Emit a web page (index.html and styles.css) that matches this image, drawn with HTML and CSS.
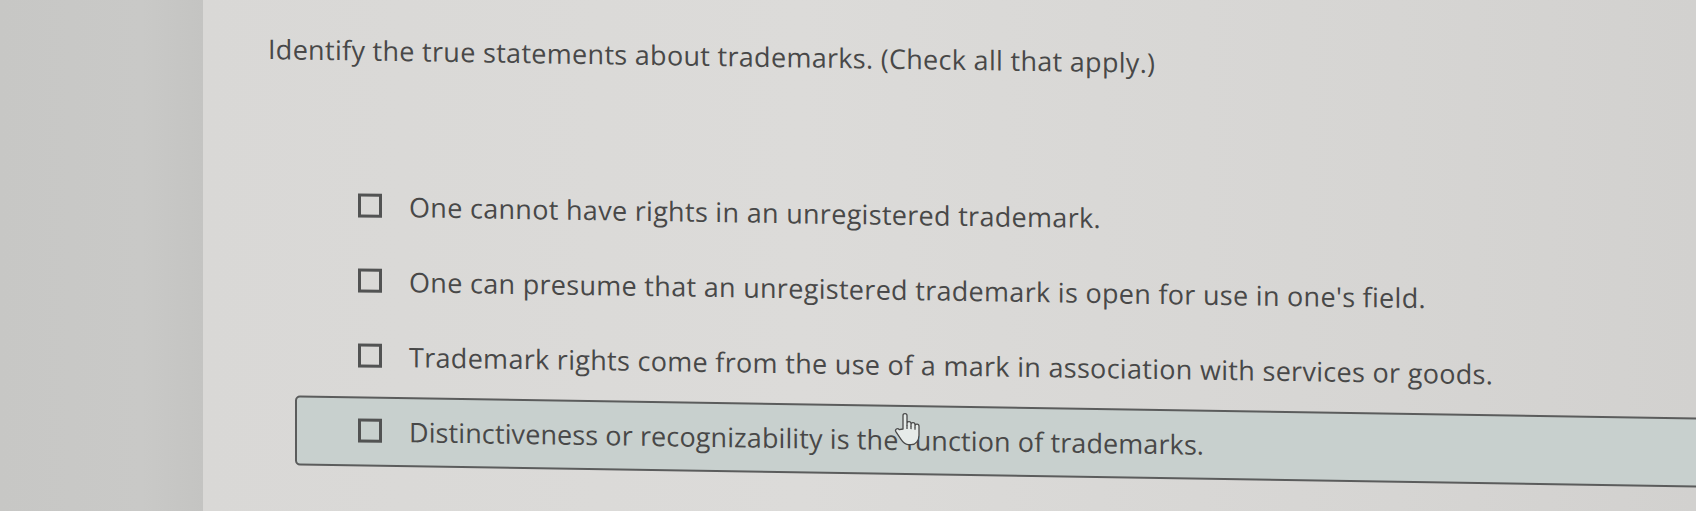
FILE: index.html
```html
<!DOCTYPE html>
<html lang="en">
<head>
<meta charset="utf-8">
<title>Trademarks question</title>
<link rel="stylesheet" href="styles.css">
</head>
<body>
<div class="screen">
  <aside class="side"></aside>
  <main class="content">
    <div class="inner">
      <p class="question">Identify the true statements about trademarks. (Check all that apply.)</p>
      <ul class="options">
        <li class="option"><span class="box"></span><span class="label">One cannot have rights in an unregistered trademark.</span></li>
        <li class="option"><span class="box"></span><span class="label">One can presume that an unregistered trademark is open for use in one's field.</span></li>
        <li class="option"><span class="box"></span><span class="label">Trademark rights come from the use of a mark in association with services or goods.</span></li>
        <li class="option hover"><span class="box"></span><span class="label last">Distinctiveness or recognizability is the function of trademarks.</span>
          <svg class="cursor" viewBox="0 0 28 34" aria-hidden="true">
            <path d="M9 17 V3.5 a2 2 0 0 1 4 0 V13 V11.5 a2 2 0 0 1 4 0 V14 V12.5 a2 2 0 0 1 4 0 V15 V14 a2 2 0 0 1 4 0 V23 c0 5 -3 9.5 -8 9.5 h-3 c-3 0 -5 -2 -7 -5 l-5 -7.5 a2 2 0 0 1 3.2 -2.4 Z" />
            <path class="gap" d="M13 13 v4 M17 14 v3 M21 15 v2.5" />
          </svg>
        </li>
      </ul>
    </div>
  </main>
</div>
</body>
</html>
```
FILE: styles.css
```css
html, body {
  margin: 0;
  padding: 0;
  width: 100%;
  height: 100%;
  overflow: hidden;
  background: #d7d6d4;
}

.screen {
  display: flex;
  width: 100%;
  height: 100%;
  font-family: "Open Sans", Lato, "Liberation Sans", sans-serif;
  color: #484848;
}

.side {
  flex: 0 0 203px;
  background: linear-gradient(90deg, #c7c7c5 0%, #c9c9c7 70%, #c4c4c2 100%);
}

.content {
  flex: 1;
  min-width: 0;
  overflow: hidden;
  background: linear-gradient(90deg, #d9d8d6 0%, #dcdbd9 40%, #d6d5d3 80%, #d2d1cf 100%);
}

.inner {
  transform: skewY(0.9deg);
  transform-origin: 0 0;
}

.question {
  margin: 0;
  padding: 32px 0 0 65px;
  font-size: 27px;
  line-height: 32px;
  letter-spacing: 0.3px;
}

.options {
  list-style: none;
  margin: 105px -40px 0 92px;
  padding: 0;
  display: flex;
  flex-direction: column;
  gap: 5px;
}

.option {
  position: relative;
  display: flex;
  align-items: center;
  height: 70px;
  box-sizing: border-box;
  padding-left: 61px;
  border: 2px solid transparent;
  border-radius: 5px;
  font-size: 27px;
  line-height: 32px;
  letter-spacing: 0.3px;
}

.option.hover {
  background: #c8d0ce;
  border-color: #5b5c5c;
}

.box {
  flex: 0 0 24px;
  width: 24px;
  height: 24px;
  box-sizing: border-box;
  border: 3px solid #525353;
  margin-right: 27px;
  margin-bottom: 3px;
}

.label {
  white-space: nowrap;
}

.label.last {
  letter-spacing: 0.1px;
}

.cursor {
  position: absolute;
  left: 597px;
  top: 5px;
  width: 28px;
  height: 34px;
}

.cursor path {
  fill: #e6ebe9;
  stroke: #4a4a4a;
  stroke-width: 1.3;
  stroke-linejoin: round;
}

.cursor .gap {
  fill: none;
}
```
